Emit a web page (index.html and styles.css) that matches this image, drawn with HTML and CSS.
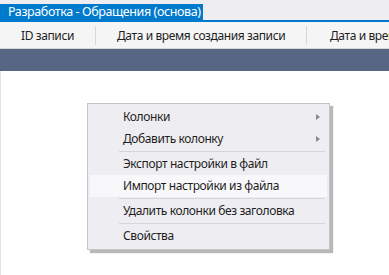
FILE: index.html
```html
<!DOCTYPE html>
<html lang="ru">
<head>
<meta charset="utf-8">
<link rel="stylesheet" href="styles.css">
</head>
<body>
<div class="window">
  <div class="titlebar">
    <div class="tab">Разработка - Обращения (основа)</div>
  </div>
  <div class="header">
    <div class="col col-id">ID записи</div>
    <div class="col col-date">Дата и время создания записи</div>
    <div class="col col-date2">Дата и время изменения записи</div>
  </div>
  <div class="band"></div>
  <div class="content">
    <div class="menu">
      <div class="item sub">Колонки<span class="arrow"></span></div>
      <div class="item sub">Добавить колонку<span class="arrow"></span></div>
      <div class="sep"></div>
      <div class="item">Экспорт настройки в файл</div>
      <div class="item hot">Импорт настройки из файла</div>
      <div class="sep"></div>
      <div class="item">Удалить колонки без заголовка</div>
      <div class="sep"></div>
      <div class="item">Свойства</div>
    </div>
  </div>
</div>
</body>
</html>
```
FILE: styles.css
```css
* { box-sizing: border-box; }
html, body { margin: 0; padding: 0; }
body {
  width: 389px;
  height: 275px;
  overflow: hidden;
  background: #ffffff;
  font-family: "Noto Sans", "Open Sans", sans-serif;
  font-size: 12px;
  letter-spacing: -0.4px;
  color: #1e1e1e;
}
.window { display: flex; flex-direction: column; height: 275px; }
.titlebar {
  height: 22px;
  padding-top: 4px;
  background: #eeeef2;
  border-bottom: 2px solid #007acc;
  display: flex;
}
.tab {
  width: 203px;
  height: 16px;
  background: #007acc;
  color: #ffffff;
  font-size: 12.5px;
  line-height: 16px;
  padding-left: 8px;
  white-space: nowrap;
  overflow: hidden;
}
.header {
  height: 27px;
  background: #f5f5f5;
  border-bottom: 1px solid #d6d6d6;
  display: flex;
  align-items: center;
  white-space: nowrap;
  overflow: hidden;
}
.col {
  height: 19px;
  line-height: 19px;
  flex: none;
}
.col-id { width: 96px; padding-left: 21px; border-right: 1px solid #d8d8d8; }
.col-date { width: 211px; padding-left: 21px; border-right: 1px solid #d8d8d8; }
.col-date2 { padding-left: 23px; }
.band {
  height: 22px;
  background: #566785;
}
.content {
  flex: 1;
  position: relative;
  border-left: 1px solid #e2e2e2;
}
.menu {
  position: absolute;
  left: 86px;
  top: 32px;
  width: 243px;
  padding: 2px;
  background: #eeeef2;
  border: 1px solid #c4c4c8;
  box-shadow: 3px 3px 1px rgba(0,0,0,0.28);
}
.item {
  position: relative;
  height: 22px;
  line-height: 22px;
  padding-left: 33px;
  white-space: nowrap;
}
.item.hot {
  background: #f8f8fa;
}
.arrow {
  position: absolute;
  right: 7px;
  top: 8px;
  width: 0;
  height: 0;
  border-top: 3.5px solid transparent;
  border-bottom: 3.5px solid transparent;
  border-left: 4px solid #8a8a8a;
}
.sep {
  height: 1px;
  margin: 1px 2px 1px 29px;
  background: #d6d6da;
}
```
